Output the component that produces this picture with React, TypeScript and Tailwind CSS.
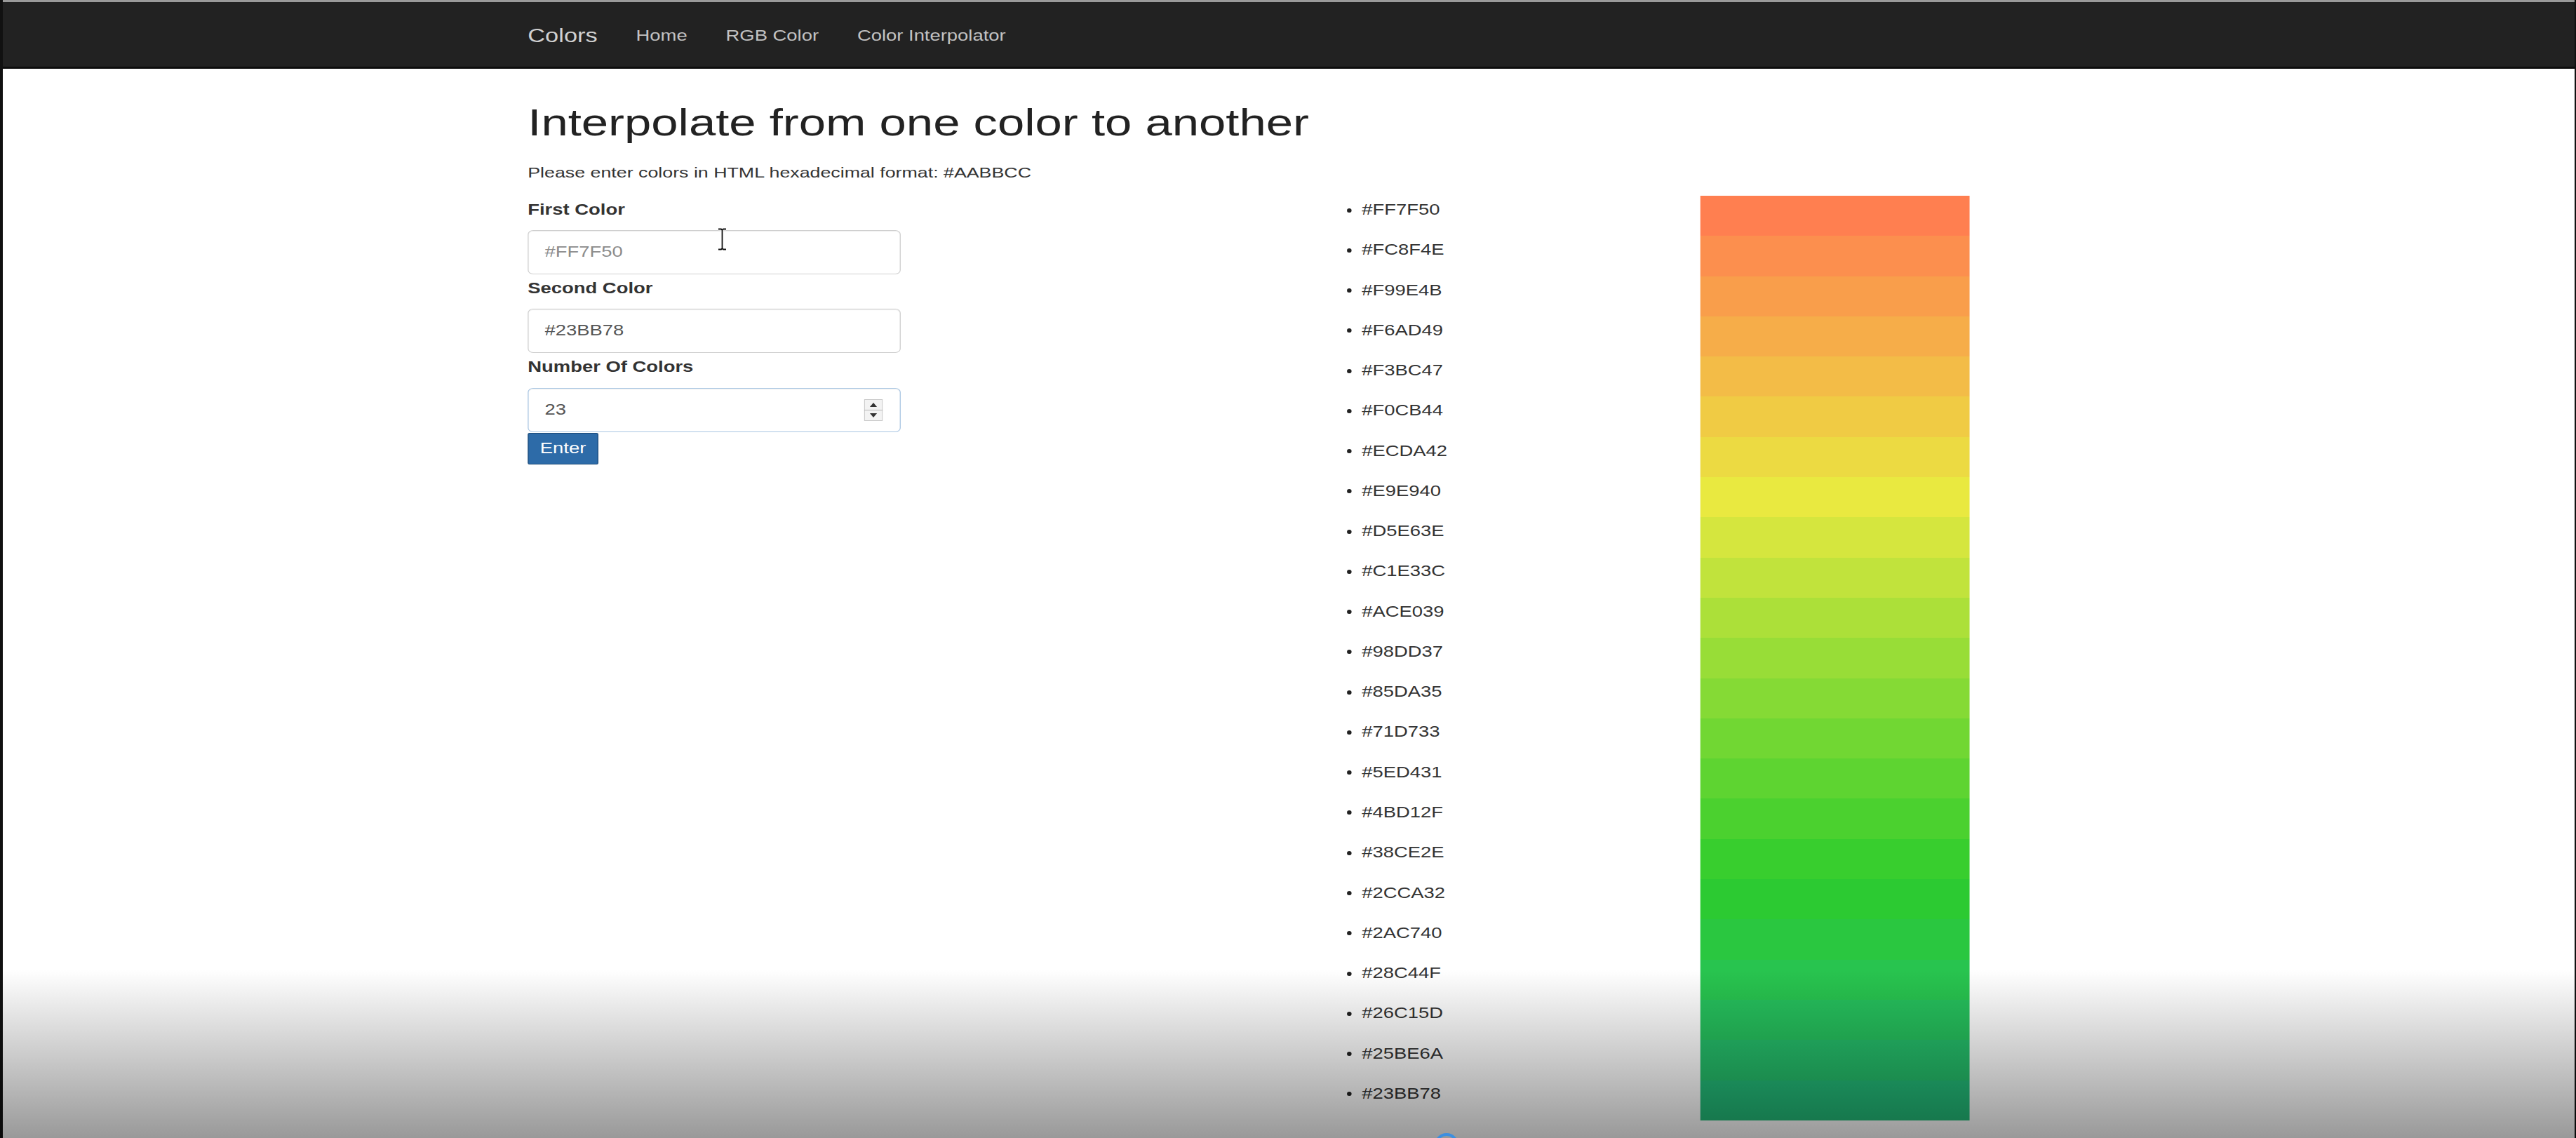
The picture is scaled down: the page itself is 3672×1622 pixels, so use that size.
import React from 'react';

// colors produced by the interpolator, first to last
const colors = [
   '#FF7F50',
   '#FC8F4E',
   '#F99E4B',
   '#F6AD49',
   '#F3BC47',
   '#F0CB44',
   '#ECDA42',
   '#E9E940',
   '#D5E63E',
   '#C1E33C',
   '#ACE039',
   '#98DD37',
   '#85DA35',
   '#71D733',
   '#5ED431',
   '#4BD12F',
   '#38CE2E',
   '#2CCA32',
   '#2AC740',
   '#28C44F',
   '#26C15D',
   '#25BE6A',
   '#23BB78',
];

const inputBase =
   'block h-[63px] w-full rounded-[6px] border bg-white px-[18px] text-[21.5px] text-[#555] outline-none shadow-[inset_0_1px_1px_rgba(0,0,0,0.075)]';

function Spinner() {
   return (
      <svg viewBox="0 0 21 31" className="absolute right-[20px] top-[16px] h-[31px] w-[21px]">
         <rect x="0.5" y="0.5" width="20" height="30" fill="#f3f3f3" stroke="#c9c9c9" />
         <line x1="0" y1="15.5" x2="21" y2="15.5" stroke="#b5b5b5" />
         <path d="M10.5 5 L14.5 11 L6.5 11 Z" fill="#333" />
         <path d="M10.5 26 L14.5 20 L6.5 20 Z" fill="#333" />
      </svg>
   );
}

export default function App() {
   return (
      <div className="relative h-[1622px] w-full overflow-hidden bg-white font-['Liberation_Sans',Arial,sans-serif] text-[#333]">
         {/* the recording is stretched sideways, so the page is too */}
         <div className="w-[2880px] origin-top-left scale-x-[1.275]">
            {/* Navbar */}
            <nav className="h-[98px] border-t-[3px] border-b-[3px] border-t-[#9a9a9a] border-b-[#0d0d0d] bg-[#222]">
               <div className="ml-[590px] flex h-full items-center gap-[43px] pt-[4px]">
                  <span className="text-[27px] text-[#d0d0d0]">Colors</span>
                  <span className="text-[21.5px] text-[#c2c2c2]">Home</span>
                  <span className="text-[21.5px] text-[#c2c2c2]">RGB Color</span>
                  <span className="text-[21.5px] text-[#c2c2c2]">Color Interpolator</span>
               </div>
            </nav>

            <div className="ml-[590px]">
               <h1 className="mt-[47px] text-[54px] leading-[59px] text-[#222]">
                  Interpolate from one color to another
               </h1>
               <p className="mt-[26px] text-[21px] leading-[31px]">
                  Please enter colors in HTML hexadecimal format: #AABBCC
               </p>

               <div className="mt-[21px] flex items-start">
                  {/* Form */}
                  <form className="w-[417px]" onSubmit={(e) => e.preventDefault()}>
                     <label className="block pt-[2px] text-[21.5px] font-bold leading-[31px]">First Color</label>
                     <input
                        type="text"
                        placeholder="#FF7F50"
                        className={inputBase + ' mt-[13px] border-[#cfcfcf] placeholder:text-[#8c8c8c]'}
                     />

                     <label className="mt-[3px] block pt-[2px] text-[21.5px] font-bold leading-[31px]">
                        Second Color
                     </label>
                     <input
                        type="text"
                        defaultValue="#23BB78"
                        className={inputBase + ' mt-[13px] border-[#cfcfcf]'}
                     />

                     <label className="mt-[3px] block pt-[2px] text-[21.5px] font-bold leading-[31px]">
                        Number Of Colors
                     </label>
                     <div className="relative mt-[14px]">
                        <input
                           type="text"
                           defaultValue="23"
                           className={
                              inputBase + ' border-[#a9c6e3] shadow-[0_0_6px_rgba(102,175,233,0.35)]'
                           }
                        />
                        <Spinner />
                     </div>

                     <button
                        type="submit"
                        className="mt-[1px] h-[45px] w-[79px] rounded-[2px] border border-[#1c4a78] bg-[#2d6ba8] text-[21.5px] text-white"
                     >
                        Enter
                     </button>
                  </form>

                  {/* List of hex values */}
                  <ul className="ml-[499px] mt-[2px] w-[395px]">
                     {colors.map((c) => (
                        <li key={c} className="flex h-[57.27px] items-start">
                           <span className="flex h-[31px] items-center">
                              <span className="h-[6px] w-[4.5px] rounded-full bg-[#222]" />
                           </span>
                           <span className="ml-[12px] text-[21.5px] leading-[31px]">{c}</span>
                        </li>
                     ))}
                  </ul>

                  {/* Swatches */}
                  <div className="-mt-[3px] w-[301px]">
                     {colors.map((c) => (
                        <div key={c} className="h-[57.3px]" style={{ backgroundColor: c }} />
                     ))}
                  </div>
               </div>
            </div>
         </div>

         {/* mouse cursor */}
         <svg viewBox="0 0 13 32" className="absolute left-[1023px] top-[325px] h-[32px] w-[13px]">
            <path
               d="M1 1.5h4l1.5 1.5L8 1.5h4M6.5 3v26M1 30.5h4l1.5-1.5L8 30.5h4"
               stroke="#fff"
               strokeWidth="3.5"
               fill="none"
            />
            <path
               d="M1 1.5h4l1.5 1.5L8 1.5h4M6.5 3v26M1 30.5h4l1.5-1.5L8 30.5h4"
               stroke="#111"
               strokeWidth="1.8"
               fill="none"
            />
         </svg>

         {/* video frame edges and bottom shade */}
         <div className="absolute inset-y-0 left-0 w-[4px] bg-[#111]" />
         <div className="absolute inset-y-0 right-0 w-[2px] bg-[#111]" />
         <div className="pointer-events-none absolute inset-x-0 bottom-0 h-[240px] bg-linear-to-b from-transparent to-black/40" />
         <div className="absolute left-[2045px] top-[1615px] h-[34px] w-[34px] rounded-full border-[4px] border-[#3d8fe0]" />
      </div>
   );
}
